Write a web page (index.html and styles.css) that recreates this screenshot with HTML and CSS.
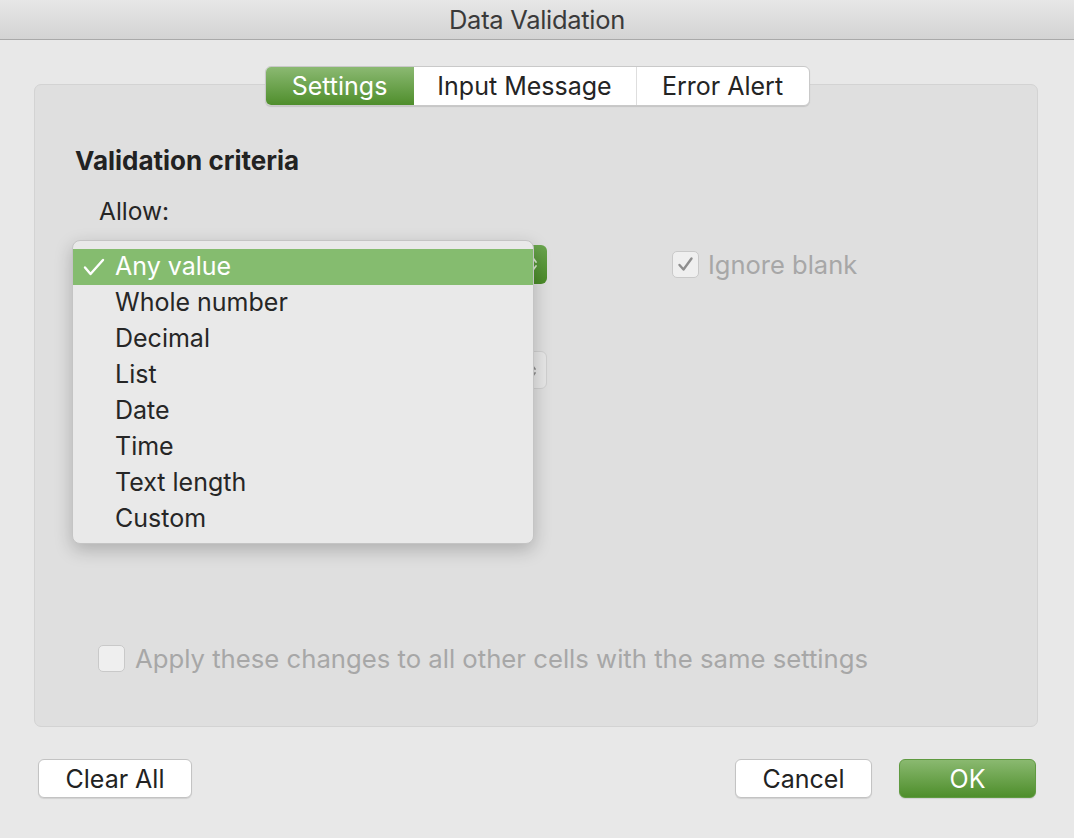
FILE: index.html
```html
<!DOCTYPE html>
<html>
<head>
<meta charset="utf-8">
<link rel="stylesheet" href="styles.css">
</head>
<body>
<div class="window">
  <div class="titlebar">Data Validation</div>
  <div class="content">
    <div class="panel">
      <div class="tabs">
        <div class="tab active">Settings</div>
        <div class="tab">Input Message</div>
        <div class="tab last">Error Alert</div>
      </div>
      <div class="heading">Validation criteria</div>
      <div class="label">Allow:</div>
      <div class="row">
        <div class="select green">
          <svg class="chev" width="10" height="18" viewBox="0 0 10 18"><path d="M2 7 L5 3 L8 7 M2 11 L5 15 L8 11" fill="none" stroke="#d7ecc9" stroke-width="1.8" stroke-linecap="round" stroke-linejoin="round"/></svg>
        </div>
        <label class="check disabled">
          <span class="box"><svg width="19" height="17" viewBox="0 0 19 17"><path d="M3.5 9 L7.5 13.5 L15.5 2.5" fill="none" stroke="#8e8e8e" stroke-width="2.4" stroke-linecap="round" stroke-linejoin="round"/></svg></span>
          <span class="ctext">Ignore blank</span>
        </label>
      </div>
      <div class="select plain">
        <svg class="chev" width="10" height="18" viewBox="0 0 10 18"><path d="M2 7 L5 3 L8 7 M2 11 L5 15 L8 11" fill="none" stroke="#8d8d8d" stroke-width="1.8" stroke-linecap="round" stroke-linejoin="round"/></svg>
      </div>
      <label class="check disabled apply">
        <span class="box"></span>
        <span class="ctext">Apply these changes to all other cells with the same settings</span>
      </label>

      <div class="menu">
        <div class="item selected"><svg class="tick" width="22" height="18" viewBox="0 0 22 18"><path d="M2 9.5 L7.5 16 L20 2" fill="none" stroke="#fff" stroke-width="2.4" stroke-linecap="round" stroke-linejoin="round"/></svg>Any value</div>
        <div class="item">Whole number</div>
        <div class="item">Decimal</div>
        <div class="item">List</div>
        <div class="item">Date</div>
        <div class="item">Time</div>
        <div class="item">Text length</div>
        <div class="item">Custom</div>
      </div>
    </div>
    <div class="buttons">
      <button class="btn clear">Clear All</button>
      <div class="spacer"></div>
      <button class="btn cancel">Cancel</button>
      <button class="btn ok">OK</button>
    </div>
  </div>
</div>
</body>
</html>
```
FILE: styles.css
```css
* { box-sizing: border-box; }
html, body {
  margin: 0;
  padding: 0;
  width: 1074px;
  height: 838px;
  overflow: hidden;
  background: #e8e8e8;
  font-family: "Inter", "Liberation Sans", sans-serif;
  color: #262626;
}
.window {
  width: 1074px;
  height: 838px;
  display: flex;
  flex-direction: column;
}
.titlebar {
  height: 40px;
  background: linear-gradient(#e7e7e7, #d3d3d3);
  border-bottom: 1px solid #a9a9a9;
  text-align: center;
  font-size: 25.5px;
  line-height: 39px;
  color: #3a3a3a;
  letter-spacing: -0.3px;
}
.content {
  padding: 44px 36px 0 34px;
  display: flex;
  flex-direction: column;
}
.panel {
  position: relative;
  height: 643px;
  background: #dfdfdf;
  border: 1px solid #d3d3d3;
  border-radius: 7px;
  padding: 0 0 0 40px;
  display: flex;
  flex-direction: column;
  align-items: flex-start;
}
.tabs {
  align-self: center;
  margin-top: -19px;
  margin-left: -38px;
  display: flex;
  height: 40px;
  background: #fff;
  border: 1px solid #c9c9c9;
  border-radius: 6px;
  box-shadow: 0 1px 1px rgba(0,0,0,0.12);
  overflow: hidden;
}
.tab {
  font-size: 25px;
  line-height: 38px;
  color: #242424;
  border-right: 1px solid #dedede;
  text-align: center;
}
.tab:nth-child(2) { width: 223px; }
.tab.last { border-right: 0; width: 172px; }
.tab.active {
  width: 148px;
  color: #fff;
  background: linear-gradient(#8bb972, #4f8e2c);
  border-right: 0;
}
.heading {
  margin-top: 43px;
  font-size: 26px;
  font-weight: 700;
  line-height: 24px;
  color: #222;
}
.label {
  margin-top: 26px;
  margin-left: 24px;
  font-size: 24.5px;
  line-height: 24px;
  color: #262626;
}
.row {
  margin-top: 22px;
  margin-left: 24px;
  display: flex;
  align-items: center;
}
.select {
  position: relative;
  width: 448px;
  height: 39px;
  border-radius: 6px;
}
.select .chev { position: absolute; right: 9px; top: 10px; }
.select.green {
  background: linear-gradient(#6aa54e, #4a8a28);
}
.select.plain {
  margin-top: 67px;
  margin-left: 24px;
  height: 38px;
  background: #e6e6e6;
  border: 1px solid #d0d0d0;
}
.check {
  display: flex;
  align-items: center;
}
.row .check { margin-left: 125px; }
.box {
  width: 27px;
  height: 27px;
  border: 1px solid #c9c9c9;
  border-radius: 5px;
  background: #efefef;
  display: flex;
  align-items: center;
  justify-content: center;
}
.ctext {
  margin-left: 9px;
  font-size: 25.5px;
  color: #a7a7a7;
}
.check.apply {
  margin-top: 254px;
  margin-left: 23px;
}
.check.apply .ctext { margin-left: 10px; font-size: 25.7px; }

.menu {
  position: absolute;
  left: 37px;
  top: 155px;
  width: 462px;
  height: 304px;
  padding-top: 8px;
  background: #e9e9e9;
  border: 1px solid #c4c4c4;
  border-radius: 8px;
  box-shadow: 0 6px 18px rgba(0,0,0,0.22);
}
.item {
  position: relative;
  height: 36px;
  line-height: 34px;
  padding-left: 42px;
  font-size: 25px;
  color: #262626;
}
.item.selected {
  background: #85bc6f;
  color: #fff;
}
.tick {
  position: absolute;
  left: 10px;
  top: 9px;
}
.buttons {
  margin-top: 32px;
  display: flex;
  align-items: center;
  padding-left: 4px;
}
.spacer { flex: 1; }
.btn {
  height: 39px;
  font-family: "Inter", "Liberation Sans", sans-serif;
  font-size: 25px;
  color: #222;
  background: #fff;
  border: 1px solid #c3c3c3;
  border-radius: 6px;
  box-shadow: 0 1px 1px rgba(0,0,0,0.1);
  padding: 0;
}
.btn.clear { width: 154px; }
.btn.cancel { width: 137px; }
.btn.ok {
  width: 137px;
  margin-left: 27px;
  margin-right: 2px;
  color: #fff;
  border-color: #5f9a40;
  background: linear-gradient(#8ab970, #4e8e2b);
}
```
